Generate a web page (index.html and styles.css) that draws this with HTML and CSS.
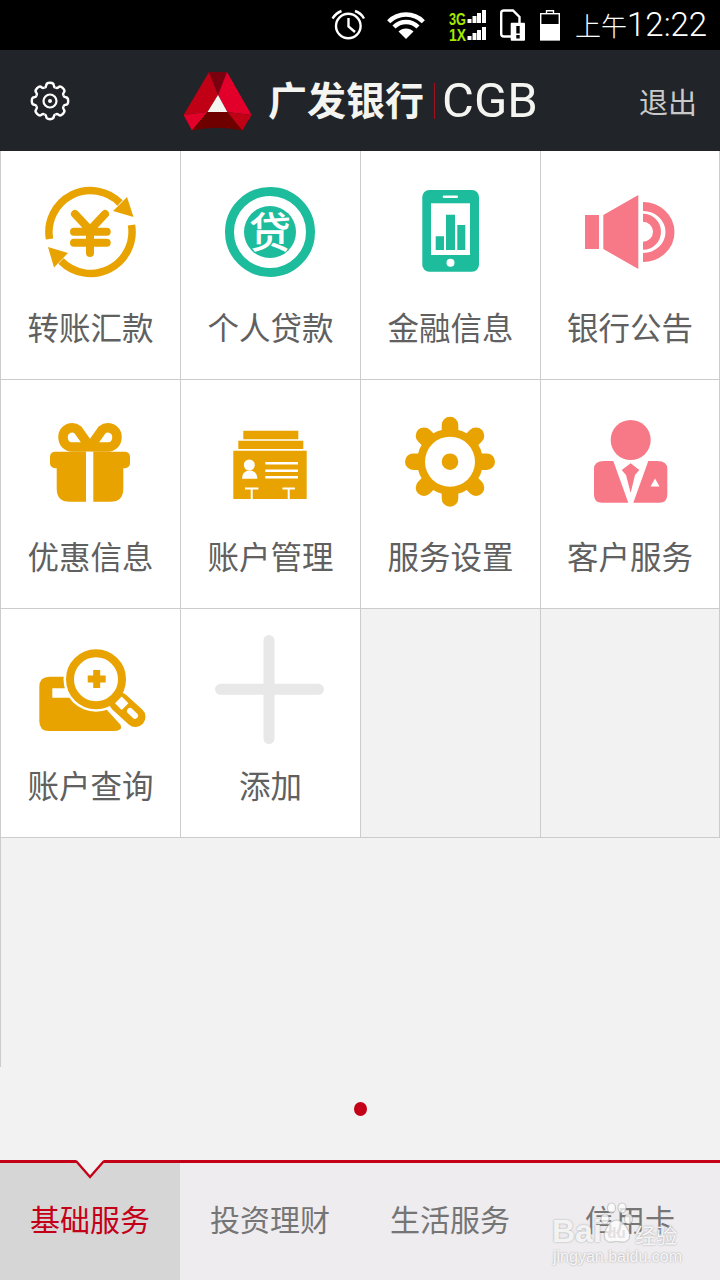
FILE: index.html
```html
<!DOCTYPE html>
<html lang="zh-CN">
<head>
  <meta charset="UTF-8">
  <meta name="viewport" content="width=device-width, initial-scale=1.0">
  <title>广发银行</title>
  <link rel="stylesheet" href="styles.css">
</head>
<body>

<!-- Status bar -->
<div class="status-bar">
  <svg class="st-icon st-alarm" viewBox="328 0 50 50">
    <circle cx="348.3" cy="26" r="12.3" fill="none" stroke="#fff" stroke-width="2.4"/>
    <path d="M348.5 18V26.5L355 32M332.5 18.5Q336 13 341.5 11M355 11Q361 13 364 18.5" fill="none" stroke="#fff" stroke-width="2.4"/>
  </svg>
  <svg class="st-icon st-wifi" viewBox="378 0 60 50">
    <path d="M388.7 21.7A24.5 24.5 0 0 1 423.3 21.7M394 27A17 17 0 0 1 418 27" fill="none" stroke="#fff" stroke-width="4.4"/>
    <path d="M406 39L398.5 31.5A10.6 10.6 0 0 1 413.5 31.5Z" fill="#fff"/>
  </svg>
  <svg class="st-icon st-net" viewBox="438 0 58 50">
    <text class="net-text" x="449" y="24.5" textLength="17" lengthAdjust="spacingAndGlyphs">3G</text>
    <text class="net-text" x="449" y="40.5" textLength="17" lengthAdjust="spacingAndGlyphs">1X</text>
    <path d="M467.5 19h4v4h-4zM472.5 16h4v7h-4zM477 13h4v10h-4zM482 10h4v13h-4zM467.5 36h4v4h-4zM472.5 33h4v7h-4zM477 30h4v10h-4zM482 27h4v13h-4z" fill="#fff"/>
  </svg>
  <svg class="st-icon st-sim" viewBox="496 0 34 50">
    <path d="M511 36.5H504Q501.2 36.5 501.2 34V13Q501.2 10.5 504 10.5H513L519.5 17V23" fill="none" stroke="#fff" stroke-width="2.4"/>
    <rect x="510.7" y="22.7" width="14.3" height="18" rx="1" fill="#fff"/>
    <path d="M516.3 26h3.4v7.5h-3.4zM516.3 35h3.4v3.4h-3.4z" fill="#000"/>
  </svg>
  <svg class="st-icon st-battery" viewBox="530 0 36 50">
    <path d="M546.5 13.5V10.7H553.5V13.5" fill="none" stroke="#fff" stroke-width="1.4"/>
    <rect x="540.7" y="13.7" width="18.6" height="26" fill="none" stroke="#fff" stroke-width="1.4"/>
    <rect x="540" y="24" width="20" height="16.4" fill="#fff"/>
  </svg>
  <div class="st-time"><span class="st-ampm">上午</span>12:22</div>
</div>

<!-- Header -->
<header class="top-bar">
  <svg class="top-gear" viewBox="-20 -20 40 40">
    <defs>
      <path id="lobe" d="M-5.55 -13.4Q-3.8 -14 -3.8 -15.6Q-3.8 -18.2 0 -18.2Q3.8 -18.2 3.8 -15.6Q3.8 -14 5.55 -13.4" fill="none" stroke="#fff" stroke-width="2.4"/>
    </defs>
    <use href="#lobe"/>
    <use href="#lobe" transform="rotate(45)"/>
    <use href="#lobe" transform="rotate(90)"/>
    <use href="#lobe" transform="rotate(135)"/>
    <use href="#lobe" transform="rotate(180)"/>
    <use href="#lobe" transform="rotate(225)"/>
    <use href="#lobe" transform="rotate(270)"/>
    <use href="#lobe" transform="rotate(315)"/>
    <circle r="6.5" fill="none" stroke="#fff" stroke-width="2.2"/>
    <circle r="2" fill="#fff"/>
  </svg>
  <svg class="top-logo" viewBox="183 71 69 60">
    <path d="M209 72H227L218 95Z" fill="#7a0010"/>
    <path d="M209 72L218 95L207.5 112L183.6 115Z" fill="#bf0015"/>
    <path d="M227 72L251.6 115L227.3 112L218 95Z" fill="#e2002a"/>
    <path d="M183.6 115L207.5 112L192 130.5Z" fill="#e2002a"/>
    <path d="M207.5 112H227.3L242.4 130.5Q217 125 192 130.5Z" fill="#6e0000"/>
    <path d="M227.3 112L251.6 115L242.4 130.5Z" fill="#bf0015"/>
    <path d="M218 95L207.5 112H227.3Z" fill="#f4f4f0"/>
  </svg>
  <span class="brand-cn">广发银行</span>
  <span class="brand-line"></span>
  <span class="brand-en">CGB</span>
  <span class="top-exit">退出</span>
</header>

<!-- Service grid -->
<div class="grid">
  <div class="cell">
    <svg class="cell-icon" viewBox="30 0 120 120">
      <path d="M49.5 69A41.5 41.5 0 0 1 120 33M131.5 55A41.5 41.5 0 0 1 61 91" fill="none" stroke="#e8a300" stroke-width="7.5"/>
      <path d="M127 27L133.5 47L113 41ZM48 77L68 83L54 97.5Z" fill="#e8a300"/>
      <path d="M75 44L90 60L105 44M74 61.7H106.7M74 72.7H106.7M90 60V83" fill="none" stroke="#e8a300" stroke-width="8" stroke-linecap="round" stroke-linejoin="round"/>
    </svg>
    <div class="cell-label">转账汇款</div>
  </div>
  <div class="cell">
    <svg class="cell-icon" viewBox="210 0 120 120">
      <circle cx="270" cy="62" r="40.5" fill="none" stroke="#1cbc9c" stroke-width="9"/>
      <circle cx="270" cy="62" r="26" fill="#1cbc9c"/>
      <text class="loan-char" x="270" y="78">贷</text>
    </svg>
    <div class="cell-label">个人贷款</div>
  </div>
  <div class="cell">
    <svg class="cell-icon" viewBox="30 0 120 120">
      <rect x="62.3" y="20" width="56.7" height="81.7" rx="7" fill="#1cbc9c"/>
      <rect x="71" y="33.3" width="39" height="51.7" fill="#fff"/>
      <rect x="82.7" y="25.5" width="15.3" height="2.6" rx="1.3" fill="#fff"/>
      <circle cx="90.5" cy="92.7" r="4" fill="#fff"/>
      <path d="M75.7 66.3h8.3v13.7h-8.3zM86 44.7h9v35.3h-9zM97.3 55h8v25h-8z" fill="#1cbc9c"/>
    </svg>
    <div class="cell-label">金融信息</div>
  </div>
  <div class="cell">
    <svg class="cell-icon" viewBox="210 0 120 120">
      <rect x="225" y="45" width="14" height="34" fill="#f77987"/>
      <path d="M243.3 45L278.3 25V99L243.3 79Z" fill="#f77987"/>
      <path d="M283 36.5A27 25.5 0 0 1 283 87.5" fill="none" stroke="#f77987" stroke-width="9"/>
      <path d="M283 47.7A14 14 0 0 1 283 75.7" fill="none" stroke="#f77987" stroke-width="8"/>
    </svg>
    <div class="cell-label">银行公告</div>
  </div>

  <div class="cell">
    <svg class="cell-icon" viewBox="30 -1 120 120">
      <path d="M90 47L78 30C72 25 63 29 63 37C63 44 68 47 72 47H108C112 47 117 44 117 37C117 29 108 25 102 30Z" fill="none" stroke="#e8a300" stroke-width="9.5" stroke-linejoin="round"/>
      <rect x="50" y="51.7" width="80" height="16.6" rx="5" fill="#e8a300"/>
      <path d="M56.7 60H123.3V88.7Q123.3 101.7 110.3 101.7H69.7Q56.7 101.7 56.7 88.7Z" fill="#e8a300"/>
      <rect x="86" y="51.7" width="7.3" height="51" fill="#fff"/>
    </svg>
    <div class="cell-label">优惠信息</div>
  </div>
  <div class="cell">
    <svg class="cell-icon" viewBox="210 -1 120 120">
      <path d="M243.3 30.7h55v8.6h-55zM238.3 40.7h65v8.3h-65zM233.3 50.7h73.4v48.3h-73.4z" fill="#e8a300"/>
      <circle cx="249.3" cy="65" r="5.5" fill="#fff"/>
      <path d="M242 78.7Q242 71 249.5 70.5Q257.3 71 257.3 78.7Z" fill="#fff"/>
      <path d="M265.3 62h32.7v2.6h-32.7zM265.3 69.4h32.7v2.6h-32.7zM265.3 76h32.7v2.6h-32.7z" fill="#fff"/>
      <path d="M245 87.5h13.4v2h-5.7v9.5h-2v-9.5h-5.7zM282.5 87.5h12.4v2h-5.2v9.5h-2v-9.5h-5.2z" fill="#fff"/>
    </svg>
    <div class="cell-label">账户管理</div>
  </div>
  <div class="cell">
    <svg class="cell-icon" viewBox="30 -1 120 120">
      <path d="M90 25V98.4M53.3 61.7H126.7M64 35.7L116 87.7M116 35.7L64 87.7" fill="none" stroke="#e8a300" stroke-width="16.6" stroke-linecap="round"/>
      <circle cx="90" cy="61.7" r="33" fill="#e8a300"/>
      <circle cx="90" cy="61.7" r="25" fill="#fff"/>
      <circle cx="90" cy="61.7" r="8.3" fill="#e8a300"/>
    </svg>
    <div class="cell-label">服务设置</div>
  </div>
  <div class="cell">
    <svg class="cell-icon" viewBox="210 -1 120 120">
      <circle cx="270.7" cy="40" r="20" fill="#f77987"/>
      <path d="M244 61H253.3L268.3 102.7H242Q234 102.7 234 94.7V69Q234 61 244 61Z" fill="#f77987"/>
      <path d="M288.3 61H297.3Q307.3 61 307.3 69V94.7Q307.3 102.7 299.3 102.7H273.3Z" fill="#f77987"/>
      <path d="M261.7 70L270.7 63.3L279.3 70L275 75L270.7 93L266 75Z" fill="#f77987"/>
      <path d="M295 78.5L299.5 86.5H290.5Z" fill="#fff"/>
    </svg>
    <div class="cell-label">客户服务</div>
  </div>

  <div class="cell">
    <svg class="cell-icon" viewBox="30 3 120 120">
      <path d="M39.3 62Q39.3 51.7 49.5 51.7H66V63.3H52.3V72.7H90L107 85L120.7 100Q123 106 113 106H49Q39.3 106 39.3 96Z" fill="#e8a300"/>
      <circle cx="96" cy="54.3" r="32.5" fill="#fff"/>
      <path d="M119 77L135.5 92" stroke="#e8a300" stroke-width="20" stroke-linecap="round"/>
      <circle cx="96" cy="54.3" r="26" fill="#fff" stroke="#e8a300" stroke-width="8"/>
      <path d="M93.2 45h7v5.5h5.5v7h-5.5v5.5h-7v-5.5h-5.5v-7h5.5z" fill="#e8a300"/>
      <path d="M121.7 71.6L128.4 78.3L121.7 85L115 78.3Z" fill="#fff"/>
      <path d="M130 86L135 90.7" stroke="#fff" stroke-width="6" stroke-linecap="round"/>
    </svg>
    <div class="cell-label">账户查询</div>
  </div>
  <div class="cell">
    <svg class="cell-icon" viewBox="210 3 120 120">
      <path d="M269 15.5V113.5M220.5 64.3H318.5" fill="none" stroke="#e8e8e8" stroke-width="11" stroke-linecap="round"/>
    </svg>
    <div class="cell-label">添加</div>
  </div>
  <div class="cell empty"></div>
  <div class="cell empty"></div>
</div>

<div class="next-row"></div>

<div class="pager">
  <span class="pager-dot"></span>
</div>

<!-- Bottom tabs -->
<nav class="tabs">
  <div class="tab active">基础服务</div>
  <div class="tab">投资理财</div>
  <div class="tab">生活服务</div>
  <div class="tab">信用卡</div>
  <svg class="tab-notch" viewBox="0 0 28 20">
    <path d="M0 0H28L14 17Z" fill="#f2f2f2"/>
    <path d="M0 1L14 17L28 1" fill="none" stroke="#c40018" stroke-width="2.4"/>
  </svg>
  <!-- baidu watermark -->
  <svg class="wm-paw" viewBox="0 0 34 42">
    <g fill="#fff" fill-opacity="0.75" stroke="#999" stroke-opacity="0.45" stroke-width="1.2">
      <ellipse cx="6" cy="17" rx="4" ry="5"/>
      <ellipse cx="12.5" cy="6" rx="4" ry="5"/>
      <ellipse cx="23" cy="6" rx="4" ry="5"/>
      <ellipse cx="29.5" cy="17" rx="4" ry="5"/>
      <path d="M17.5 18C24 18 33 30 30 37C26 42 22 39.500 17.500 39.500C13 39.500 9 42 6 37C3 30 11 18 17.500 18Z"/>
    </g>
    <text class="wm-du" x="17.500" y="36">du</text>
  </svg>
  <div class="wm-word">Bai</div>
  <div class="wm-cn">经验</div>
  <div class="wm-url">jingyan.baidu.com</div>
</nav>

</body>
</html>
```

FILE: styles.css
```css
body {
  margin: 0;
  width: 720px;
  height: 1280px;
  overflow: hidden;
  display: flex;
  flex-direction: column;
  background-color: #f2f2f2;
  font-family: "Noto Sans CJK SC", "Noto Sans", sans-serif;
}

/* status bar */
.status-bar {
  height: 50px;
  flex-shrink: 0;
  display: flex;
  align-items: center;
  background-color: #000;
  color: #fff;
  padding-left: 328px;
}

.st-icon {
  height: 50px;
  display: block;
  flex-shrink: 0;
}

.st-alarm { width: 50px; }
.st-wifi { width: 60px; }
.st-net { width: 58px; }
.st-sim { width: 34px; }
.st-battery { width: 36px; }

.net-text {
  font-family: "Liberation Sans", sans-serif;
  font-size: 16px;
  font-weight: bold;
  fill: #a4e800;
}

.st-time {
  padding-left: 9px;
  font-family: Roboto, sans-serif;
  font-weight: 300;
  font-size: 33px;
  line-height: 50px;
  white-space: nowrap;
}

.st-ampm {
  font-family: "Noto Sans CJK SC", sans-serif;
  font-size: 26px;
  font-weight: 300;
}

/* header */
.top-bar {
  height: 101px;
  flex-shrink: 0;
  display: flex;
  align-items: center;
  background-color: #212429;
  color: #f4f4f0;
}

.top-gear {
  width: 40px;
  height: 40px;
  margin-left: 30px;
}

.top-logo {
  width: 69px;
  height: 60px;
  margin-left: 113px;
}

.brand-cn {
  margin-left: 16px;
  margin-bottom: 5px;
  font-size: 39px;
  font-weight: bold;
  white-space: nowrap;
}

.brand-line {
  width: 1px;
  height: 36px;
  margin-left: 10px;
  background-color: #a01020;
}

.brand-en {
  margin-left: 7px;
  font-family: Roboto, sans-serif;
  font-size: 49px;
}

.top-exit {
  margin-left: auto;
  padding-right: 23px;
  font-size: 29px;
  color: #c9c9c9;
}

/* grid */
.grid {
  display: grid;
  grid-template-columns: repeat(4, 180px);
  grid-auto-rows: 229px;
  flex-shrink: 0;
}

.cell {
  box-sizing: border-box;
  padding-top: 19px;
  background-color: #fff;
  border-left: 1px solid #ccc;
  border-bottom: 1px solid #ccc;
  display: flex;
  flex-direction: column;
  align-items: center;
}

.cell:nth-child(4n) {
  border-right: 1px solid #ccc;
}

.cell.empty {
  background-color: #f2f2f2;
}

.cell-icon {
  width: 120px;
  height: 120px;
  flex-shrink: 0;
  margin-right: 2px;
}

.cell:nth-child(4n) .cell-icon {
  margin-right: 0;
}

.cell-label {
  font-size: 31.5px;
  line-height: 72px;
  color: #606060;
  white-space: nowrap;
}

.loan-char {
  font-family: "Noto Sans CJK SC", sans-serif;
  font-size: 42px;
  font-weight: 500;
  fill: #fff;
  text-anchor: middle;
}

.next-row {
  height: 229px;
  flex-shrink: 0;
  box-sizing: border-box;
  border-left: 1px solid #ccc;
}

.pager {
  height: 93px;
  flex-shrink: 0;
  display: flex;
  justify-content: center;
  padding-top: 35px;
  box-sizing: border-box;
}

.pager-dot {
  width: 13px;
  height: 14px;
  border-radius: 50%;
  background-color: #c40018;
}

/* tabs */
.tabs {
  position: relative;
  flex: 1;
  display: grid;
  grid-template-columns: repeat(4, 180px);
  border-top: 3px solid #c40018;
  background-color: #efecef;
}

.tab {
  font-size: 30px;
  line-height: 110px;
  text-align: center;
  color: #757575;
}

.tab.active {
  background-color: #d6d6d6;
  color: #c40018;
}

.tab-notch {
  position: absolute;
  left: 76px;
  top: -3px;
  width: 28px;
  height: 20px;
}

/* watermark sits over the last tab */
.wm-word,
.wm-cn,
.wm-url {
  position: absolute;
  color: rgba(255, 255, 255, 0.9);
  text-shadow: 0 0 2px #999;
  white-space: nowrap;
}

.wm-word {
  left: 552px;
  top: 50px;
  font-family: "Liberation Sans", sans-serif;
  font-size: 32px;
  font-weight: bold;
  line-height: 36px;
}

.wm-paw {
  position: absolute;
  left: 599px;
  top: 39px;
  width: 34px;
  height: 42px;
}

.wm-du {
  font-family: "Liberation Sans", sans-serif;
  font-size: 15px;
  font-weight: bold;
  fill: #e4dfe4;
  text-anchor: middle;
}

.wm-cn {
  left: 635px;
  top: 55px;
  font-size: 21px;
  line-height: 32px;
}

.wm-url {
  left: 553px;
  top: 84px;
  font-family: "Liberation Sans", sans-serif;
  font-size: 16px;
  line-height: 20px;
}
```
